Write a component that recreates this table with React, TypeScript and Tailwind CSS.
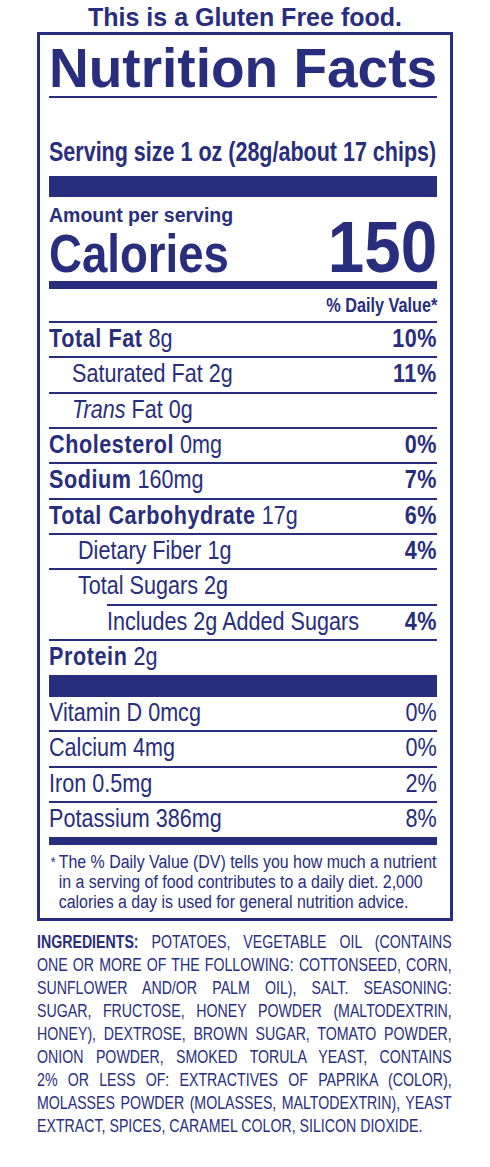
import type { ReactNode } from "react";

function Row({
  children,
  dv,
  dvBold = true,
  className = "",
}: {
  children: ReactNode;
  dv?: string;
  dvBold?: boolean;
  className?: string;
}) {
  return (
    <div className={`flex items-start border-t-2 border-[#292d7d] text-[26px] leading-[31px] ${className}`}>
      <div className="min-w-0 flex-1 whitespace-nowrap">
        <span className="inline-block origin-left scale-x-[0.83]">{children}</span>
      </div>
      {dv && (
        <span
          className={`inline-block origin-right scale-x-[0.83] ${dvBold ? "font-bold tracking-[0.7px]" : ""}`}
        >
          {dv}
        </span>
      )}
    </div>
  );
}

const ingredients = [
  "POTATOES, VEGETABLE OIL (CONTAINS",
  "ONE OR MORE OF THE FOLLOWING: COTTONSEED, CORN,",
  "SUNFLOWER AND/OR PALM OIL), SALT. SEASONING:",
  "SUGAR, FRUCTOSE, HONEY POWDER (MALTODEXTRIN,",
  "HONEY), DEXTROSE, BROWN SUGAR, TOMATO POWDER,",
  "ONION POWDER, SMOKED TORULA YEAST, CONTAINS",
  "2% OR LESS OF: EXTRACTIVES OF PAPRIKA (COLOR),",
  "MOLASSES POWDER (MOLASSES, MALTODEXTRIN), YEAST",
];

export default function App() {
  return (
    <div className="min-h-screen overflow-hidden bg-white font-['Liberation_Sans',Arial,sans-serif] text-[#292d7d]">
      <div className="h-[32px] pt-[3px] text-center text-[25px] font-bold leading-[28px]">
        This is a Gluten Free food.
      </div>

      {/* label box */}
      <div className="ml-[37px] w-[416px] border-[3px] border-[#292d7d] pl-[9px] pr-[13px]">
        <div className="whitespace-nowrap pt-[8px] text-[55px] font-bold leading-[50px]">Nutrition Facts</div>
        <div className="mt-[3px] h-[2px] bg-[#292d7d]" />
        <div className="mt-[39px] overflow-hidden whitespace-nowrap text-[28px] font-bold leading-[30px]">
          <span className="inline-block origin-left scale-x-[0.768]">Serving size 1 oz (28g/about 17 chips)</span>
        </div>
        <div className="mt-[9px] h-[21px] bg-[#292d7d]" />

        <div className="mt-[8px] text-[19.5px] font-bold leading-[21px]">Amount per serving</div>
        <div className="flex h-[55px] items-baseline justify-between font-bold">
          <span className="origin-left scale-x-[0.86] text-[53px] leading-[46px]">Calories</span>
          <span className="origin-right scale-x-[0.91] text-[72px] leading-[42px]">150</span>
        </div>
        <div className="h-[8px] bg-[#292d7d]" />
        <div className="h-[32px] whitespace-nowrap pt-[5px] text-right text-[19.5px] font-bold leading-[22px]">
          <span className="inline-block origin-right scale-x-[0.833]">% Daily Value*</span>
        </div>

        <Row dv="10%" className="h-[35.33px]">
          <b className="tracking-[0.7px]">Total Fat</b> 8g
        </Row>
        <Row dv="11%" className="h-[35.33px] pl-[23px]">
          Saturated Fat 2g
        </Row>
        <Row className="h-[35.33px] pl-[23px]">
          <i>Trans</i> Fat 0g
        </Row>
        <Row dv="0%" className="h-[35.33px]">
          <b className="tracking-[0.7px]">Cholesterol</b> 0mg
        </Row>
        <Row dv="7%" className="h-[35.33px]">
          <b className="tracking-[0.7px]">Sodium</b> 160mg
        </Row>
        <Row dv="6%" className="h-[35.33px]">
          <b className="tracking-[0.7px]">Total Carbohydrate</b> 17g
        </Row>
        <Row dv="4%" className="h-[35.33px] pl-[29px]">
          Dietary Fiber 1g
        </Row>
        <Row className="h-[35.33px] pl-[29px]">Total Sugars 2g</Row>
        <Row dv="4%" className="ml-[58px] h-[35.33px]">
          Includes 2g Added Sugars
        </Row>
        <Row className="h-[36px]">
          <b className="tracking-[0.7px]">Protein</b> 2g
        </Row>
        <div className="h-[20px] bg-[#292d7d]" />

        <Row dv="0%" dvBold={false} className="h-[35.5px]">
          Vitamin D 0mcg
        </Row>
        <Row dv="0%" dvBold={false} className="h-[35.5px]">
          Calcium 4mg
        </Row>
        <Row dv="2%" dvBold={false} className="h-[35.5px]">
          Iron 0.5mg
        </Row>
        <Row dv="8%" dvBold={false} className="h-[35.5px]">
          Potassium 386mg
        </Row>
        <div className="h-[8px] bg-[#292d7d]" />

        <div className="overflow-hidden pb-[6px] pt-[7px]">
          <div className="flex w-[438px] origin-left scale-x-[0.885] whitespace-nowrap text-[18px] leading-[20px]">
            <span className="w-[11px] shrink-0 pl-[2px] text-[14px]">*</span>
            <div>
              The % Daily Value (DV) tells you how much a nutrient
              <br />
              in a serving of food contributes to a daily diet. 2,000
              <br />
              calories a day is used for general nutrition advice.
            </div>
          </div>
        </div>
      </div>

      {/* ingredients */}
      <div className="ml-[37px] mt-[9px] w-[415px] overflow-hidden">
        <div className="w-[556px] origin-left scale-x-[0.746] text-[19px] leading-[23px]">
          {ingredients.map((line, i) => (
            <div key={i} className="text-justify [text-align-last:justify]">
              {i === 0 && <b>INGREDIENTS: </b>}
              {line}
            </div>
          ))}
          <div>EXTRACT, SPICES, CARAMEL COLOR, SILICON DIOXIDE.</div>
        </div>
      </div>
    </div>
  );
}
